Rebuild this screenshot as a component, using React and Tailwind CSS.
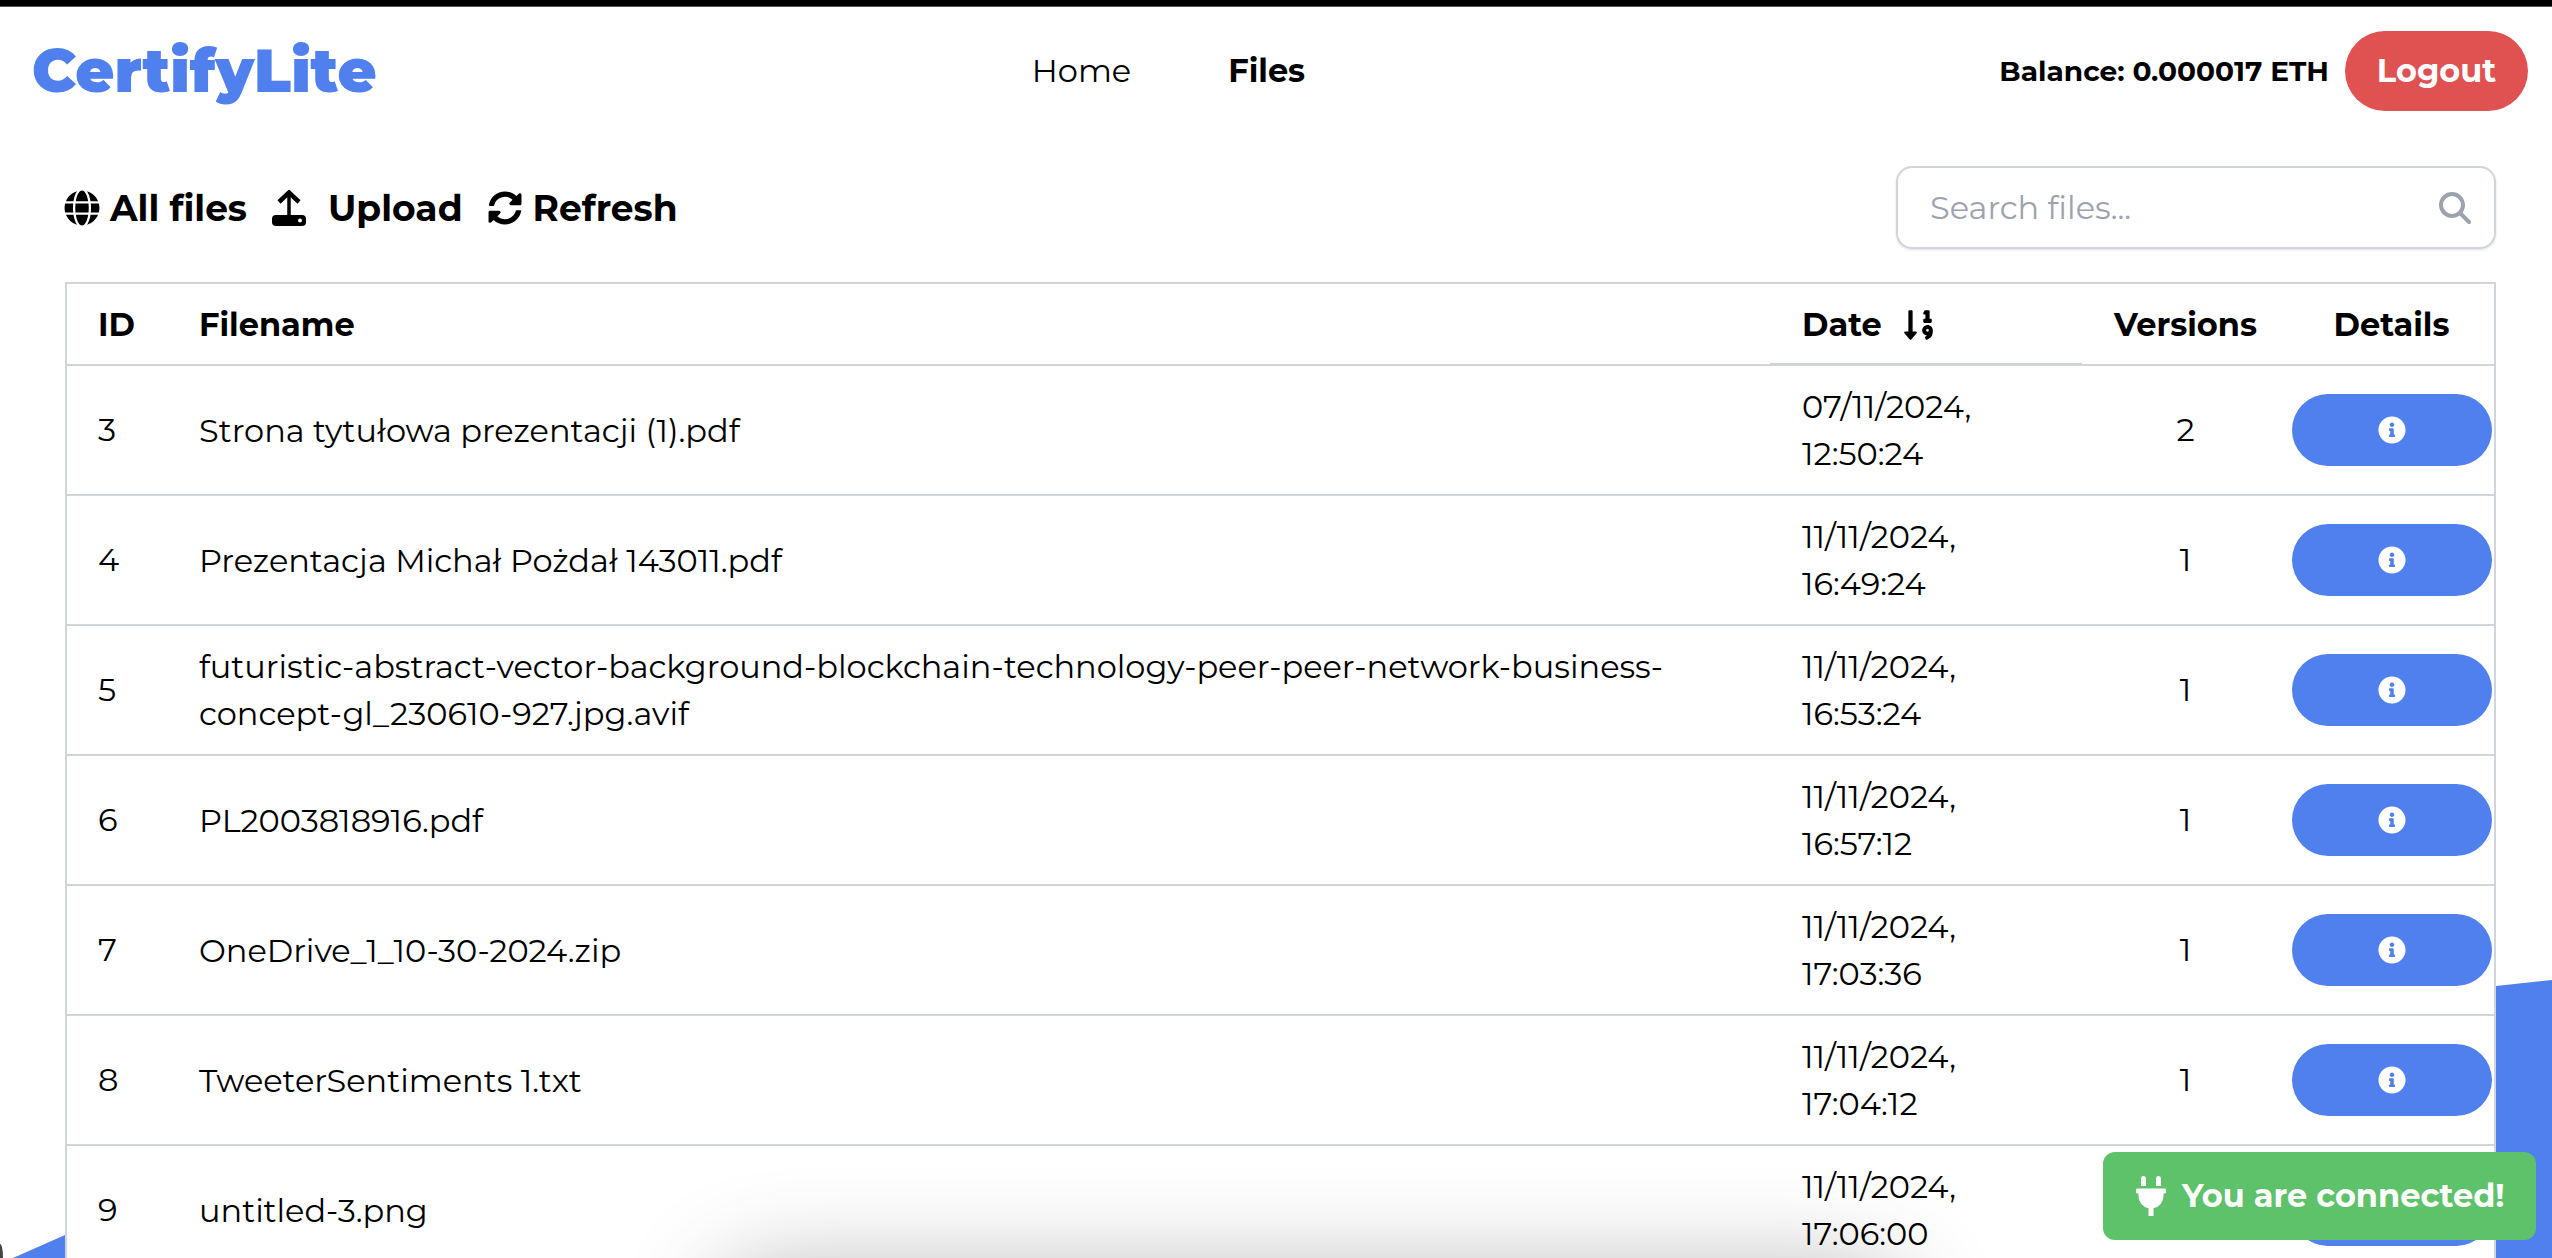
import React from "react";
import { FaGlobe, FaSyncAlt, FaSortNumericDown, FaInfoCircle, FaPlug } from "react-icons/fa";
import { FaMagnifyingGlass } from "react-icons/fa6";

const rows = [
  ["3", "Strona tytułowa prezentacji (1).pdf", "07/11/2024,", "12:50:24", "2"],
  ["4", "Prezentacja Michał Pożdał 143011.pdf", "11/11/2024,", "16:49:24", "1"],
  ["5", "futuristic-abstract-vector-background-blockchain-technology-peer-peer-network-business-concept-gl_230610-927.jpg.avif", "11/11/2024,", "16:53:24", "1"],
  ["6", "PL2003818916.pdf", "11/11/2024,", "16:57:12", "1"],
  ["7", "OneDrive_1_10-30-2024.zip", "11/11/2024,", "17:03:36", "1"],
  ["8", "TweeterSentiments 1.txt", "11/11/2024,", "17:04:12", "1"],
  ["9", "untitled-3.png", "11/11/2024,", "17:06:00", "1"],
];

function UploadIcon() {
  return (
    <svg width="36" height="36" viewBox="0 0 36 36" className="shrink-0">
      <rect x="1" y="25" width="34" height="11" rx="4" fill="currentColor" />
      <circle cx="29" cy="30.5" r="2" fill="#fff" />
      <path d="M8 12 L18 2.5 L28 12" fill="none" stroke="currentColor" strokeWidth="4.5" />
      <path d="M18 4 V28" fill="none" stroke="currentColor" strokeWidth="3.5" />
    </svg>
  );
}

export default function App() {
  return (
    <div className="relative h-[1258px] w-full overflow-hidden bg-white text-black font-['Montserrat','Inter',sans-serif]">
      <div className="absolute right-0 bottom-0 h-[278px] w-[56px] bg-[#4f80ee] [clip-path:polygon(0_6px,100%_0,100%_100%,0_100%)]" />
      <div className="absolute left-0 bottom-0 h-[23px] w-[65px] bg-[#4f80ee] [clip-path:polygon(100%_0,100%_100%,20%_100%)]" />
      <div className="absolute bottom-0 left-0 h-[14px] w-[3px] rounded-tr-[100%] bg-[#444]" />
      <div className="absolute left-[720px] top-[1272px] h-[200px] w-[1180px] rounded-[40px] bg-black/30 shadow-[0_0_100px_rgba(0,0,0,0.3)]" />
      <div className="relative flex h-full flex-col">
        <div className="h-[7px] shrink-0 border-b border-[#555] bg-black" />
        <header className="flex h-[128px] shrink-0 items-center justify-between pl-[32px] pr-[24px]">
          <div className="text-[60px] font-black leading-none text-[#4f80ee]">CertifyLite</div>
          <nav className="mr-[39px] flex items-center gap-[97px] text-[32px]">
            <span>Home</span>
            <span className="font-bold">Files</span>
          </nav>
          <div className="flex items-center gap-[16px]">
            <span className="text-[28px] font-bold">Balance: 0.000017 ETH</span>
            <button className="h-[80px] w-[183px] rounded-full bg-[#e05252] text-[32px] font-bold text-white">Logout</button>
          </div>
        </header>
        <main className="flex min-h-0 flex-col px-[56px] pt-[31px]">
          <div className="flex items-center justify-between pl-[8px]">
            <div className="flex items-center text-[36px] font-bold">
              <FaGlobe className="mr-[10px] size-[36px]" />
              <span>All files</span>
              <span className="ml-[24px] mr-[21px]"><UploadIcon /></span>
              <span>Upload</span>
              <FaSyncAlt className="ml-[25px] mr-[11px] size-[34px]" />
              <span>Refresh</span>
            </div>
            <div className="flex h-[83px] w-[600px] items-center justify-between rounded-[16px] border-2 border-[#d1d5db] pl-[32px] pr-[23px] shadow-sm">
              <span className="text-[32px] text-[#9ca3af]">Search files...</span>
              <FaMagnifyingGlass className="size-[32px] text-[#9ca3af]" />
            </div>
          </div>
          <table className="mt-[33px] ml-[9px] w-[2431px] table-fixed border-collapse border-2 border-[#d1d5db] text-[32px]">
            <colgroup>
              <col className="w-[101px]" />
              <col />
              <col className="w-[312px]" />
              <col className="w-[207px]" />
              <col className="w-[206px]" />
            </colgroup>
            <thead>
              <tr className="h-[82px] border-b-2 border-[#d1d5db]">
                <th className="pl-[31px] pt-[2px] text-left font-bold">ID</th>
                <th className="px-[32px] pt-[2px] text-left font-bold">Filename</th>
                <th className="relative px-[32px] pt-[2px] text-left font-bold">
                  <span className="inline-flex items-center gap-[20px]">Date <FaSortNumericDown className="size-[34px]" /></span>
                  <span className="absolute inset-x-0 bottom-0 h-px bg-[#d1d5db]" />
                </th>
                <th className="pt-[2px] text-center font-bold">Versions</th>
                <th className="pt-[2px] text-center font-bold">Details</th>
              </tr>
            </thead>
            <tbody>
              {rows.map((r) => (
                <tr key={r[0]} className="h-[130px] border-b-2 border-[#d1d5db]">
                  <td className="pl-[31px]">{r[0]}</td>
                  <td className="px-[32px] leading-[47px]">{r[1]}</td>
                  <td className="px-[32px] leading-[47px]">{r[2]}<br />{r[3]}</td>
                  <td className="text-center">{r[4]}</td>
                  <td>
                    <button className="ml-[3px] flex h-[72px] w-[200px] items-center justify-center rounded-full bg-[#4f80ee] text-white">
                      <FaInfoCircle className="size-[28px]" />
                    </button>
                  </td>
                </tr>
              ))}
            </tbody>
          </table>
        </main>
      </div>
      <div className="absolute left-[2103px] top-[1152px] flex h-[88px] w-[433px] items-center gap-[16px] rounded-[12px] bg-[#5ec26a] pl-[33px] text-[32px] font-bold text-white">
        <FaPlug className="h-[40px] w-[30px]" />
        <span>You are connected!</span>
      </div>
    </div>
  );
}
